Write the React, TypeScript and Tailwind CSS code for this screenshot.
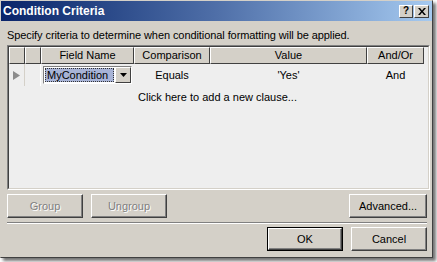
import React from "react";

const font = { fontFamily: '"Liberation Sans", Arial, sans-serif' };

function Btn({ label, disabled, def, w = "w-[76px]" }: { label: string; disabled?: boolean; def?: boolean; w?: string }) {
  const inner = (
    <div
      className={`h-full w-full flex items-center justify-center bg-[#D4D0C8] border border-t-white border-l-white border-r-[#404040] border-b-[#404040] shadow-[inset_-1px_-1px_0_#808080] text-[11px] ${
        disabled ? "text-[#808080] [text-shadow:1px_1px_0_#ffffff]" : "text-black"
      }`}
    >
      {label}
    </div>
  );
  if (def) {
    return <div className={`${w} h-[24px] border border-black`}>{inner}</div>;
  }
  return <div className={`${w} h-[24px]`}>{inner}</div>;
}

function HeadCell({ w, children }: { w: string; children?: React.ReactNode }) {
  return (
    <div
      className={`${w} h-full shrink-0 flex items-center justify-center bg-[#D4D0C8] border-l border-t border-l-white border-t-white border-r border-b border-r-[#404040] border-b-[#404040] text-[11px] text-black`}
    >
      {children}
    </div>
  );
}

export default function App() {
  return (
    <div className="w-[437px] h-[262px] bg-white" style={font}>
      <div className="w-[433px] h-[258px] bg-[#D4D0C8] border border-t-[#D4D0C8] border-l-[#D4D0C8] border-r-[#404040] border-b-[#404040] shadow-[3px_3px_3px_rgba(0,0,0,0.55)] flex flex-col">
        {/* Title bar */}
        <div className="h-[20px] flex items-center justify-between bg-gradient-to-r from-[#0A246A] via-[#4F6FA8] to-[#A6CAF0] pl-[2px] pr-[3px]">
          <span className="text-white font-bold text-[12px] leading-none">Condition Criteria</span>
          <div className="flex gap-[1px] items-center">
            <div className="w-[14px] h-[13px] bg-[#D4D0C8] border border-t-white border-l-white border-r-[#404040] border-b-[#404040] flex items-center justify-center text-[10px] font-bold text-black leading-none">
              ?
            </div>
            <div className="w-[15px] h-[13px] bg-[#D4D0C8] border border-t-white border-l-white border-r-[#404040] border-b-[#404040] flex items-center justify-center">
              <svg width="8" height="7" viewBox="0 0 8 7">
                <path d="M0 0h2l2 2.5L6 0h2L5 3.5 8 7H6L4 4.5 2 7H0l3-3.5z" fill="#000" />
              </svg>
            </div>
          </div>
        </div>

        {/* Body */}
        <div className="flex-1 flex flex-col pl-[6px] pr-[5px]">
          <div className="h-[24px] flex items-center pt-[4px] text-[11px] text-black tracking-[-0.08px]">
            Specify criteria to determine when conditional formatting will be applied.
          </div>

          {/* Grid */}
          <div className="h-[145px] mr-[-3px] border border-t-[#808080] border-l-[#808080] border-r-white border-b-white">
            <div className="h-full w-full border border-t-[#404040] border-l-[#404040] border-r-[#D4D0C8] border-b-[#D4D0C8] bg-[#EEEEEE] flex flex-col">
              <div className="h-[17px] flex">
                <HeadCell w="w-[16px]" />
                <HeadCell w="w-[16px]" />
                <HeadCell w="w-[93px]">Field Name</HeadCell>
                <HeadCell w="w-[76px]">Comparison</HeadCell>
                <HeadCell w="w-[157px]">Value</HeadCell>
                <HeadCell w="w-[57px]">And/Or</HeadCell>
              </div>
              <div className="h-[22px] flex items-center text-[11px] text-black">
                <div className="w-[16px] h-full shrink-0 flex items-center justify-center border-r border-[#D4D0C8]">
                  <svg width="7" height="9" viewBox="0 0 7 9">
                    <path d="M0 0L7 4.5L0 9z" fill="#8C8C8C" />
                  </svg>
                </div>
                <div className="w-[16px] h-full shrink-0 border-r border-white" />
                <div className="w-[93px] h-full shrink-0 flex items-center pl-[2px]">
                  <div className="w-[89px] h-[18px] border border-t-[#808080] border-l-[#808080] border-r-white border-b-white flex">
                    <div className="flex-1 flex items-center bg-white p-[1px]">
                      <div className="h-full w-full bg-[#A7B3D6] border border-dotted border-[#333] flex items-center pl-[1px] text-black">
                        MyCondition
                      </div>
                    </div>
                    <div className="w-[16px] h-full bg-[#D4D0C8] border border-t-white border-l-white border-r-[#404040] border-b-[#404040] flex items-center justify-center">
                      <svg width="7" height="4" viewBox="0 0 7 4">
                        <path d="M0 0h7L3.5 4z" fill="#000" />
                      </svg>
                    </div>
                  </div>
                </div>
                <div className="w-[76px] h-full shrink-0 flex items-center justify-center">Equals</div>
                <div className="w-[157px] h-full shrink-0 flex items-center justify-center">'Yes'</div>
                <div className="w-[57px] h-full shrink-0 flex items-center justify-center">And</div>
              </div>
              <div className="h-[22px] flex items-center pl-[129px] text-[11px] text-black">
                Click here to add a new clause...
              </div>
            </div>
          </div>

          {/* Buttons row */}
          <div className="mt-[4px] flex items-center">
            <Btn label="Group" disabled w="w-[76px]" />
            <div className="w-[8px]" />
            <Btn label="Ungroup" disabled w="w-[76px]" />
            <div className="flex-1" />
            <Btn label="Advanced..." w="w-[78px]" />
          </div>

          {/* Separator */}
          <div className="mt-[4px] h-[2px] border-t border-t-[#808080] border-b border-b-white" />

          <div className="mt-[3px] flex justify-end gap-[8px]">
            <Btn label="OK" def w="w-[76px]" />
            <Btn label="Cancel" w="w-[76px]" />
          </div>
        </div>
      </div>
    </div>
  );
}
